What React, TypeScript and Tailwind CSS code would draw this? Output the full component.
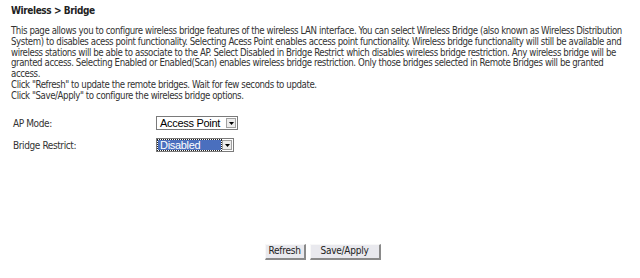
function FakeSelect({
  value,
  width,
  selected = false,
}: {
  value: string;
  width: string;
  selected?: boolean;
}) {
  return (
    <div
      className={`flex h-[14px] items-stretch border border-[#7a7a7a] bg-white ${width}`}
    >
      <div className="flex flex-1 items-center p-[1px]">
        <span
          className={
            selected
              ? "flex h-full w-full items-center whitespace-nowrap bg-[#4a6fbe] pl-[2px] text-[11px] leading-none tracking-[-0.3px] text-white outline-1 outline-dotted outline-[#222]"
              : "flex h-full w-full items-center whitespace-nowrap pl-[2px] text-[11px] leading-none tracking-[-0.3px] text-black"
          }
          style={{ fontFamily: '"Liberation Sans", Arial, sans-serif' }}
        >
          {value}
        </span>
      </div>
      <div className="my-[1px] mr-[1px] flex w-[10px] items-center justify-center border border-[#a0a0a0] bg-[#ececec]">
        <svg width="5" height="3" viewBox="0 0 5 3">
          <path d="M0 0h5L2.5 3z" fill="#000" />
        </svg>
      </div>
    </div>
  );
}

function Btn({ label, width }: { label: string; width: string }) {
  return (
    <button
      type="button"
      className={`h-[16px] border-t border-l border-[#f8f8f8] border-r-2 border-b-2 border-r-[#8a8a8a] border-b-[#8a8a8a] bg-[#e9e9ee] text-[10px] leading-none tracking-[-0.25px] text-[#222] ${width}`}
    >
      {label}
    </button>
  );
}

export default function App() {
  return (
    <div
      className="h-[278px] w-[640px] bg-white px-[11px] tracking-[-0.4px] text-[#333]"
      style={{ fontFamily: '"DejaVu Sans Condensed", "DejaVu Sans", sans-serif' }}
    >
      <div className="pt-[4px] text-[10px] font-bold leading-[13px] text-[#222]">
        Wireless &gt; Bridge
      </div>

      <p className="mt-[9px] mr-[-3px] text-[9.6px] leading-[10.8px]">
        This page allows you to configure wireless bridge features of the wireless LAN interface. You can select Wireless Bridge (also known as Wireless Distribution System) to disables acess point functionality. Selecting Acess Point enables access point functionality. Wireless bridge functionality will still be available and wireless stations will be able to associate to the AP. Select Disabled in Bridge Restrict which disables wireless bridge restriction. Any wireless bridge will be granted access. Selecting Enabled or Enabled(Scan) enables wireless bridge restriction. Only those bridges selected in Remote Bridges will be granted access.
        <br />
        Click "Refresh" to update the remote bridges. Wait for few seconds to update.
        <br />
        Click "Save/Apply" to configure the wireless bridge options.
      </p>

      <div className="mt-[14px] flex flex-col gap-[7px] pl-[2px] text-[10px]">
        <div className="flex items-center">
          <span className="w-[143px]">AP Mode:</span>
          <FakeSelect value="Access Point" width="w-[82px]" />
        </div>
        <div className="flex items-center">
          <span className="w-[143px]">Bridge Restrict:</span>
          <FakeSelect value="Disabled" width="w-[78px]" selected />
        </div>
      </div>

      <div className="mt-[91px] flex justify-center gap-[4px] pl-[5px]">
        <Btn label="Refresh" width="w-[41px]" />
        <Btn label="Save/Apply" width="w-[71px]" />
      </div>
    </div>
  );
}
